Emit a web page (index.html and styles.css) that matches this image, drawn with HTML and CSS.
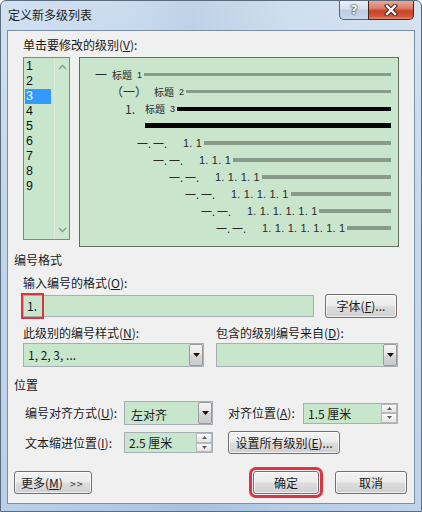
FILE: index.html
```html
<!DOCTYPE html>
<html lang="zh-CN">
<head>
<meta charset="utf-8">
<title>定义新多级列表</title>
<link rel="stylesheet" href="styles.css">
</head>
<body>
<div class="window">
  <div class="titlebar">
    <span class="title">定义新多级列表</span>
    <div class="caption">
      <div class="cap-help">?</div>
      <div class="cap-close">
        <svg width="14" height="12" viewBox="0 0 14 12">
          <path d="M3 2 L11 10 M11 2 L3 10" stroke="#4a1e16" stroke-width="4.4" stroke-linecap="square" fill="none"/>
          <path d="M3 2 L11 10 M11 2 L3 10" stroke="#ffffff" stroke-width="2.4" stroke-linecap="square" fill="none"/>
        </svg>
      </div>
    </div>
  </div>

  <div class="client">
    <div class="lbl lbl-top">单击要修改的级别(<u>V</u>):</div>

    <div class="level-row">
      <div class="listbox">
        <div class="items">
          <div class="item">1</div>
          <div class="item">2</div>
          <div class="item sel">3</div>
          <div class="item">4</div>
          <div class="item">5</div>
          <div class="item">6</div>
          <div class="item">7</div>
          <div class="item">8</div>
          <div class="item">9</div>
        </div>
        <div class="vscroll">
          <svg width="9" height="6" viewBox="0 0 9 6"><polyline points="1,5 4.5,1.5 8,5" fill="none" stroke="#8e968e" stroke-width="1.3"/></svg>
          <svg width="9" height="6" viewBox="0 0 9 6"><polyline points="1,1 4.5,4.5 8,1" fill="none" stroke="#8e968e" stroke-width="1.3"/></svg>
        </div>
      </div>

      <div class="preview">
        <div class="prow r1"><span class="hn m1">一</span><span class="ht">标题</span><span class="hd">1</span><span class="ln gray t3"></span></div>
        <div class="prow r2"><span class="hn m2">（一）</span><span class="ht">标题</span><span class="hd">2</span><span class="ln gray t3"></span></div>
        <div class="prow r3"><span class="hn m3">1.</span><span class="ht">标题</span><span class="hd">3</span><span class="ln black t4"></span></div>
        <div class="prow r4"><span class="ln black t5 nomar"></span></div>
        <div class="prow r5"><span class="k">一.</span><span class="k">一.</span><span class="n">1. 1</span><span class="ln gray t4"></span></div>
        <div class="prow r6"><span class="k">一.</span><span class="k">一.</span><span class="n">1. 1. 1</span><span class="ln gray t4"></span></div>
        <div class="prow r7"><span class="k">一.</span><span class="k">一.</span><span class="n">1. 1. 1. 1</span><span class="ln gray t4"></span></div>
        <div class="prow r8"><span class="k">一.</span><span class="k">一.</span><span class="n">1. 1. 1. 1. 1</span><span class="ln gray t4"></span></div>
        <div class="prow r9"><span class="k">一.</span><span class="k">一.</span><span class="n">1. 1. 1. 1. 1. 1</span><span class="ln gray t4"></span></div>
        <div class="prow r10"><span class="k">一.</span><span class="k">一.</span><span class="n">1. 1. 1. 1. 1. 1. 1</span><span class="ln gray t4"></span></div>
      </div>
    </div>

    <div class="lbl group g1">编号格式</div>
    <div class="lbl sub s1">输入编号的格式(<u>O</u>):</div>
    <div class="fmt-row">
      <div class="field fmt"><span class="cur">1.</span></div>
      <div class="btn btn-font">字体(<u>F</u>)...</div>
    </div>

    <div class="pair-row labels">
      <div class="lbl">此级别的编号样式(<u>N</u>):</div>
      <div class="lbl">包含的级别编号来自(<u>D</u>):</div>
    </div>
    <div class="pair-row combos">
      <div class="combo c-style">
        <span class="ctext">1, 2, 3, ...</span>
        <span class="dd"><svg width="7" height="4" viewBox="0 0 7 4"><polygon points="0,0 7,0 3.5,4" fill="#111"/></svg></span>
      </div>
      <div class="combo c-from">
        <span class="ctext"></span>
        <span class="dd"><svg width="7" height="4" viewBox="0 0 7 4"><polygon points="0,0 7,0 3.5,4" fill="#111"/></svg></span>
      </div>
    </div>

    <div class="lbl group g2">位置</div>
    <div class="pos-row p1">
      <div class="lbl plabel">编号对齐方式(<u>U</u>):</div>
      <div class="combo c-align">
        <span class="ctext">左对齐</span>
        <span class="dd"><svg width="7" height="4" viewBox="0 0 7 4"><polygon points="0,0 7,0 3.5,4" fill="#111"/></svg></span>
      </div>
      <div class="lbl plabel2">对齐位置(<u>A</u>):</div>
      <div class="spin sp-wide">
        <span class="ctext">1.5 厘米</span>
        <span class="arrows">
          <span class="ar"><svg width="5" height="3" viewBox="0 0 5 3"><polygon points="0,3 5,3 2.5,0" fill="#5a5a5a"/></svg></span>
          <span class="ar"><svg width="5" height="3" viewBox="0 0 5 3"><polygon points="0,0 5,0 2.5,3" fill="#5a5a5a"/></svg></span>
        </span>
      </div>
    </div>
    <div class="pos-row p2">
      <div class="lbl plabel">文本缩进位置(<u>I</u>):</div>
      <div class="spin sp-narrow">
        <span class="ctext">2.5 厘米</span>
        <span class="arrows">
          <span class="ar"><svg width="5" height="3" viewBox="0 0 5 3"><polygon points="0,3 5,3 2.5,0" fill="#5a5a5a"/></svg></span>
          <span class="ar"><svg width="5" height="3" viewBox="0 0 5 3"><polygon points="0,0 5,0 2.5,3" fill="#5a5a5a"/></svg></span>
        </span>
      </div>
      <div class="btn btn-all">设置所有级别(<u>E</u>)...</div>
    </div>

    <div class="bottom-row">
      <div class="btn btn-more">更多(<u>M</u>) <span class="chev">&gt;&gt;</span></div>
      <div class="right-btns">
        <div class="btn btn-ok">确定</div>
        <div class="btn btn-cancel">取消</div>
      </div>
    </div>
  </div>
</div>
</body>
</html>
```

FILE: styles.css
```css
html, body {
  margin: 0;
  padding: 0;
}
body {
  width: 422px;
  height: 512px;
  overflow: hidden;
  font-family: "Noto Sans CJK SC", "Microsoft YaHei", sans-serif;
  font-size: 12px;
  color: #1a1a1a;
  background: #ffffff;
}
.window {
  width: 422px;
  height: 512px;
  box-sizing: border-box;
  border: 1px solid #5b6c80;
  border-radius: 6px 6px 0 0;
  display: flex;
  flex-direction: column;
  background:
    linear-gradient(90deg, rgba(255,255,255,0.15) 0%, rgba(255,255,255,0) 30%, rgba(120,140,170,0.12) 45%, rgba(255,255,255,0.1) 70%, rgba(255,255,255,0.2) 100%),
    linear-gradient(180deg, #cbdcef 0%, #b8cfe8 40%, #afc8e4 100%);
}
.titlebar {
  height: 29px;
  flex: none;
  display: flex;
  align-items: flex-start;
}
.title {
  margin: 6px 0 0 7px;
  line-height: 16px;
  font-size: 12px;
  color: #1b1b1b;
}
.caption {
  margin-left: auto;
  margin-right: 7px;
  display: flex;
}
.cap-help {
  width: 29px;
  height: 19px;
  box-sizing: border-box;
  border: 1px solid #56677d;
  border-top: none;
  border-right: none;
  border-radius: 0 0 0 5px;
  background: linear-gradient(180deg, #e9f0f8 0%, #d6e2ef 45%, #bccde0 50%, #c9d8ea 100%);
  color: #ffffff;
  font-family: "DejaVu Sans", sans-serif;
  font-weight: bold;
  font-size: 13px;
  line-height: 18px;
  text-align: center;
  text-shadow: 0 0 1px #2c3a4c, 0 0 1px #2c3a4c, 0 0 2px #2c3a4c;
}
.cap-close {
  width: 46px;
  height: 19px;
  box-sizing: border-box;
  border: 1px solid #4f2218;
  border-top: none;
  border-radius: 0 0 5px 0;
  background: linear-gradient(180deg, #e9a898 0%, #dd7e69 40%, #c8432c 55%, #d0573c 85%, #e5896b 100%);
  display: flex;
  align-items: center;
  justify-content: center;
}
.client {
  flex: none;
  height: 474px;
  margin: 0 6px 0 6px;
  box-sizing: border-box;
  border: 1px solid #7b8fa7;
  background: #f0f0f0;
  padding-top: 6px;
}
.lbl {
  line-height: 16px;
  height: 16px;
  white-space: nowrap;
}
u {
  text-decoration: underline;
  text-underline-offset: 1px;
}
.lbl-top {
  margin-left: 15px;
}
.level-row {
  display: flex;
  align-items: flex-start;
  margin: 4px 0 0 15px;
}
.listbox {
  width: 47px;
  height: 183px;
  box-sizing: border-box;
  border: 1px solid #7c8a7d;
  background: #c8e6cb;
  display: flex;
}
.items {
  flex: 1;
  padding-top: 1px;
}
.item {
  height: 15px;
  line-height: 15px;
  width: 26px;
  margin-left: 1px;
  padding-left: 1px;
  box-sizing: border-box;
  font-family: "Liberation Sans", sans-serif;
  font-size: 12.5px;
  color: #111;
}
.item.sel {
  background: #3399ff;
  color: #ffffff;
}
.vscroll {
  width: 15px;
  box-sizing: border-box;
  border-left: 1px solid #dcebdd;
  background: #cbe7ce;
  display: flex;
  flex-direction: column;
  align-items: center;
  justify-content: space-between;
  padding: 6px 0 6px 0;
}
.preview {
  margin-left: 9px;
  width: 320px;
  height: 190px;
  box-sizing: border-box;
  border: 1px solid #5f6e60;
  background: #c9e5cb;
  padding: 8px 7px 0 0;
  color: #2a2a2a;
}
.prow {
  height: 17px;
  display: flex;
  align-items: center;
  white-space: nowrap;
}
.r1 { padding-left: 15px; }
.r2 { padding-left: 31px; }
.r3 { padding-left: 45px; }
.r4 { padding-left: 65px; }
.r5 { padding-left: 57px; }
.r6 { padding-left: 73px; }
.r7 { padding-left: 89px; }
.r8 { padding-left: 105px; }
.r9 { padding-left: 121px; }
.r10 { padding-left: 136px; }
.hn {
  font-size: 12px;
  line-height: 14px;
}
.m1 { margin-right: 5px; }
.m2 { margin-right: 7px; }
.m3 { margin-right: 10px; }
.ht {
  font-size: 10px;
  line-height: 12px;
}
.hd {
  font-family: "Liberation Sans", sans-serif;
  font-size: 9px;
  margin-left: 5px;
}
.k {
  display: inline-block;
  width: 16px;
  font-size: 11px;
  line-height: 14px;
}
.n {
  margin-left: 14px;
  font-family: "Liberation Sans", sans-serif;
  font-size: 11px;
  letter-spacing: 0.2px;
  line-height: 14px;
}
.ln {
  flex: 1;
  margin-left: 2px;
}
.ln.nomar { margin-left: 0; }
.gray { background: #8a9a8a; }
.black { background: #050505; }
.t3 { height: 3px; }
.t4 { height: 4px; }
.t5 { height: 5px; }

.group {
  margin-left: 6px;
}
.g1 { margin-top: 5px; }
.g2 { margin-top: 10px; }
.sub {
  margin-left: 15px;
}
.s1 { margin-top: 7px; }
.fmt-row {
  margin: 3px 0 0 15px;
  display: flex;
  align-items: center;
  height: 24px;
}
.field {
  box-sizing: border-box;
  height: 22px;
  border: 1px solid #a7aeb5;
  background: #c8e6cb;
}
.fmt {
  width: 291px;
}
.cur {
  display: inline-block;
  box-sizing: border-box;
  width: 17px;
  height: 20px;
  line-height: 20px;
  padding-left: 3px;
  outline: 2px solid #dc3441;
  outline-offset: 1px;
  font-size: 12px;
}
.btn {
  box-sizing: border-box;
  border: 1px solid #707070;
  border-radius: 3px;
  background: linear-gradient(180deg, #f3f3f3 0%, #ebebeb 48%, #dddddd 52%, #cfcfcf 100%);
  box-shadow: inset 0 0 0 1px rgba(255,255,255,0.7);
  text-align: center;
  white-space: nowrap;
  font-size: 12px;
  color: #1a1a1a;
}
.btn-font {
  margin-left: 11px;
  width: 72px;
  height: 24px;
  line-height: 22px;
}
.pair-row {
  margin-left: 15px;
  display: grid;
  grid-template-columns: 193px 182px;
}
.labels { margin-top: 7px; }
.combos { margin-top: 2px; }
.combo {
  box-sizing: border-box;
  height: 24px;
  border: 1px solid #a7aeb5;
  background: #c8e6cb;
  display: flex;
  align-items: stretch;
}
.c-style { width: 181px; }
.c-from { width: 182px; }
.ctext {
  flex: 1;
  padding-left: 4px;
  line-height: 22px;
  white-space: nowrap;
  overflow: hidden;
}
.dd {
  width: 14px;
  box-sizing: border-box;
  border: 1px solid #9a9a9a;
  border-radius: 2px;
  background: linear-gradient(180deg, #f4f4f4 0%, #e6e6e6 50%, #d6d6d6 51%, #cbcbcb 100%);
  display: flex;
  align-items: center;
  justify-content: center;
}
.pos-row {
  margin-left: 17px;
  display: flex;
  align-items: center;
}
.p1 { margin-top: 8px; height: 24px; }
.p2 { margin-top: 6px; height: 23px; }
.plabel { width: 99px; }
.plabel2 { width: 75px; margin-left: 15px; }
.c-align { width: 89px; }
.c-align .ctext { line-height: 26px; padding-left: 6px; }
.spin {
  box-sizing: border-box;
  height: 21px;
  border: 1px solid #a7aeb5;
  background: #c8e6cb;
  display: flex;
}
.sp-wide { width: 95px; }
.sp-narrow { width: 89px; }
.spin .ctext { line-height: 19px; }
.arrows {
  width: 16px;
  display: flex;
  flex-direction: column;
}
.ar {
  flex: 1;
  box-sizing: border-box;
  border: 1px solid #b9b9b9;
  background: linear-gradient(180deg, #fafafa, #e4e4e4);
  display: flex;
  align-items: center;
  justify-content: center;
}
.btn-all {
  margin-left: 15px;
  width: 112px;
  height: 23px;
  line-height: 21px;
}
.bottom-row {
  margin-top: 17px;
  padding: 0 7px 0 6px;
  display: flex;
  justify-content: space-between;
}
.right-btns {
  display: flex;
  gap: 16px;
}
.btn-more {
  width: 78px;
  height: 23px;
  line-height: 21px;
  text-align: left;
  padding-left: 6px;
}
.chev {
  font-family: "DejaVu Sans", sans-serif;
  font-size: 8px;
  margin-left: 4px;
  color: #333;
  vertical-align: 1px;
}
.btn-ok {
  width: 66px;
  height: 23px;
  line-height: 21px;
  outline: 3px solid #dc3441;
  outline-offset: 1px;
}
.btn-cancel {
  width: 72px;
  height: 23px;
  line-height: 21px;
}
```
